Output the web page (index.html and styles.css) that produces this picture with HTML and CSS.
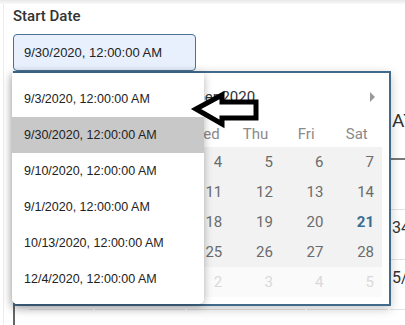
FILE: index.html
```html
<!DOCTYPE html>
<html lang="en">
<head>
    <meta charset="UTF-8">
    <meta name="viewport" content="width=device-width, initial-scale=1.0">
    <title>Start Date</title>
    <link rel="stylesheet" href="styles.css">
</head>
<body>
    <div class="topbar"></div>
    <div class="panel">
        <div class="field">
            <label class="field-label" for="startDate">Start Date</label>
            <div class="date-input" id="startDate">9/30/2020, 12:00:00 AM</div>
        </div>

        <table class="records">
            <thead>
                <tr>
                    <th class="c1"></th>
                    <th class="c2"></th>
                    <th class="c3"></th>
                    <th class="c4"></th>
                    <th class="c5"></th>
                    <th class="c6">AT</th>
                </tr>
            </thead>
            <tbody>
                <tr><td></td><td></td><td></td><td></td><td></td><td></td></tr>
                <tr><td></td><td></td><td></td><td></td><td></td><td>34</td></tr>
                <tr><td></td><td></td><td></td><td></td><td></td><td>5/25/2020</td></tr>
                <tr><td></td><td></td><td></td><td></td><td></td><td></td></tr>
            </tbody>
        </table>

        <!-- calendar popup -->
        <div class="calendar">
            <div class="cal-nav">
                <span class="cal-prev"></span>
                <span class="cal-title">November 2020</span>
                <span class="cal-next"></span>
            </div>
            <div class="cal-week">
                <span>Sun</span><span>Mon</span><span>Tue</span><span>Wed</span><span>Thu</span><span>Fri</span><span>Sat</span>
            </div>
            <div class="cal-days">
                <span>1</span><span>2</span><span>3</span><span>4</span><span>5</span><span>6</span><span>7</span>
                <span>8</span><span>9</span><span>10</span><span>11</span><span>12</span><span>13</span><span>14</span>
                <span>15</span><span>16</span><span>17</span><span>18</span><span>19</span><span>20</span><span class="today">21</span>
                <span>22</span><span>23</span><span>24</span><span>25</span><span>26</span><span>27</span><span>28</span>
                <span>29</span><span>30</span><span class="out">1</span><span class="out">2</span><span class="out">3</span><span class="out">4</span><span class="out">5</span>
            </div>
        </div>

        <!-- select list opened over the calendar -->
        <ul class="options">
            <li>9/3/2020, 12:00:00 AM</li>
            <li class="selected">9/30/2020, 12:00:00 AM</li>
            <li>9/10/2020, 12:00:00 AM</li>
            <li>9/1/2020, 12:00:00 AM</li>
            <li>10/13/2020, 12:00:00 AM</li>
            <li>12/4/2020, 12:00:00 AM</li>
        </ul>

        <svg class="pointer" width="70" height="44" viewBox="0 0 70 44">
            <path d="M6 21 L32 7 L32 14 L66 14 L66 30 L32 30 L32 36 Z" fill="#fff" stroke="#000" stroke-width="5" stroke-linejoin="miter"/>
        </svg>
    </div>
</body>
</html>
```

FILE: styles.css
```css
html, body {
    margin: 0;
    overflow: hidden;
}
body {
    width: 405px;
    height: 325px;
    background-color: #ffffff;
    font-family: Roboto, "Noto Sans", sans-serif;
    color: #333;
}
.topbar {
    height: 4px;
    background: linear-gradient(#e9e9e9, #f9f9f9);
}
.panel {
    position: relative;
    height: 321px;
    margin-left: 3px;
    padding-left: 9px;
    border-left: 1px solid #ececec;
}
.field-label {
    display: block;
    padding-top: 3px;
    font-size: 15px;
    line-height: 18px;
    font-weight: 500;
    color: #333;
}
.date-input {
    margin-top: 9px;
    width: 183px;
    height: 37px;
    box-sizing: border-box;
    padding-left: 10px;
    border: 1px solid #4b7491;
    border-radius: 4px;
    background-color: #e8f0fd;
    font: 13px/35px "Liberation Sans", Arial, sans-serif;
    color: #222;
}

/* table behind the popups */
.records {
    margin-top: 12px;
    width: 394px;
    table-layout: fixed;
    border-collapse: separate;
    border-spacing: 2px 0;
    border-left: 2px solid #666;
}
.records th {
    height: 75px;
    padding: 0;
    border-bottom: 2px solid #777;
    font-size: 19px;
    font-weight: 400;
    text-align: left;
    color: #333;
    white-space: nowrap;
    overflow: hidden;
}
.records td {
    height: 50px;
    padding: 8px 0 0 2px;
    box-sizing: border-box;
    vertical-align: top;
    border-bottom: 1px solid #e2e2e2;
    font-size: 16px;
    line-height: 20px;
    white-space: nowrap;
    overflow: hidden;
}
.records td:first-child,
.records .c1 {
    border-bottom: none;
}
.records .c1 { width: 10px; }
.records .c2 { width: 64px; }
.records .c3 { width: 90px; }
.records .c4 { width: 118px; }
.records .c5 { width: 81px; }
.records .c6 { width: 13px; padding-left: 2px; }

/* calendar */
.calendar {
    position: absolute;
    left: 9px;
    top: 67px;
    width: 378px;
    height: 235px;
    box-sizing: border-box;
    padding: 0 7px 0 13px;
    border: 2px solid #40698a;
    background-color: #fff;
    box-shadow: 0 3px 10px rgba(0,0,0,0.22);
}
.cal-nav {
    display: flex;
    align-items: center;
    justify-content: space-between;
    height: 48px;
    margin: 0 -7px 0 -13px;
    padding: 0 14px;
}
.cal-title {
    font-size: 15px;
    color: #333;
}
.cal-prev,
.cal-next {
    width: 0;
    height: 0;
    border-top: 5px solid transparent;
    border-bottom: 5px solid transparent;
}
.cal-prev {
    border-right: 5px solid #999;
}
.cal-next {
    border-left: 5px solid #999;
}
.cal-week,
.cal-days {
    display: grid;
    grid-template-columns: repeat(7, 1fr);
}
.cal-week span {
    height: 26px;
    line-height: 26px;
    text-align: center;
    font-size: 15px;
    color: #8a8a8a;
}
.cal-days span {
    height: 30px;
    line-height: 30px;
    padding-right: 8px;
    text-align: right;
    font-size: 15px;
    color: #6b6b6b;
    background-color: #f2f2f2;
}
.cal-days span.out {
    color: #d9d9d9;
    background-color: #fafafa;
}
.cal-days span.today {
    color: #3a6d93;
    font-weight: 700;
}

/* open select list */
.options {
    position: absolute;
    left: 8px;
    top: 69px;
    width: 192px;
    margin: 0;
    padding: 8px 0 7px;
    list-style: none;
    background-color: #fff;
    border-radius: 0 0 5px 5px;
    box-shadow: 0 2px 8px rgba(0,0,0,0.3);
    font: 12.5px "Liberation Sans", Arial, sans-serif;
    color: #222;
}
.options li {
    height: 36px;
    line-height: 36px;
    padding-left: 12px;
}
.options li.selected {
    background-color: #c8c8c8;
}

.pointer {
    position: absolute;
    left: 186px;
    top: 84px;
}
```
